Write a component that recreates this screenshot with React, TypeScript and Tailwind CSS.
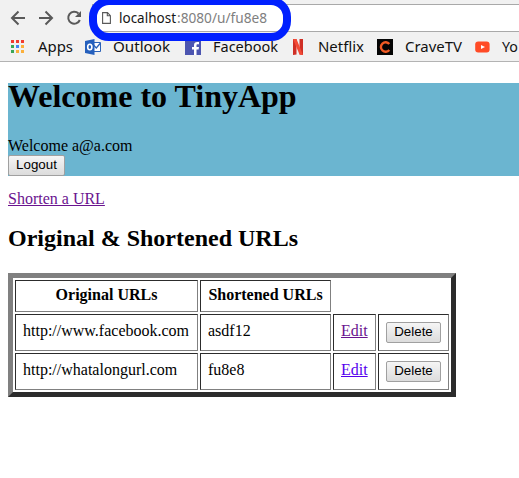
import type { ReactNode } from 'react';

const Label = ({ text, width }: { text: string; width: number }) => (
  <svg width={width} height="20" className="shrink-0 overflow-visible">
    <text x="0" y="15" textLength={width} lengthAdjust="spacingAndGlyphs" className="fill-[#111] font-['Noto_Sans',sans-serif] text-[14.500px]">{text}</text>
  </svg>
);

const AppsIcon = () => (
  <svg width="13" height="13" shapeRendering="crispEdges" className="mb-[2px] shrink-0">
    {['#f23b30', '#f23b30', '#f23b30', '#3aa757', '#4285f4', '#fbb03b', '#3aa757', '#fbb03b', '#fbb03b'].map((c, i) => (
      <rect key={i} x={(i % 3) * 5} y={Math.floor(i / 3) * 5} width="3" height="3" fill={c} />
    ))}
  </svg>
);

const OutlookIcon = () => (
  <svg width="16" height="16" className="shrink-0">
    <path d="M8 3.5h7.5v9H8z" fill="#fff" stroke="#2b62b8" />
    <path d="M8.5 6l2.8 3L15.5 4" fill="none" stroke="#2b62b8" strokeWidth="1.3" />
    <path d="M0 2L9.500 0v16L0 14z" fill="#2560bd" />
    <ellipse cx="4.800" cy="8" rx="2.100" ry="2.800" fill="none" stroke="#fff" strokeWidth="1.600" />
  </svg>
);

const FacebookIcon = () => (
  <svg width="16" height="16" className="shrink-0">
    <path d="M0 0h16v16H0z" fill="#4c55b0" />
    <path d="M9 16v-5.500H7V8h2V6.300C9 4 10.300 3 12.200 3H14v2.300h-1.300c-1 0-1.200.4-1.200 1.200V8H14l-.4 2.500h-2.100V16z" fill="#fff" />
  </svg>
);

const NetflixIcon = () => (
  <svg width="10" height="16" className="shrink-0">
    <path d="M0 0h3.500v15.500L0 16zM6.500 0H10v16l-3.500-.5z" fill="#cf2f26" />
    <path d="M0 0h3.500L10 16l-3.500-.5z" fill="#f34a36" />
  </svg>
);

const CraveIcon = () => (
  <svg width="16" height="16" className="shrink-0">
    <path d="M0 0h16v16H0z" fill="#050505" />
    <path d="M12.300 5.100A4.700 4.700 0 1 0 12.300 10.900" fill="none" stroke="#f05a24" strokeWidth="2.400" />
  </svg>
);

const YoutubeIcon = () => (
  <svg width="15" height="12" className="shrink-0">
    <rect x=".2" y=".5" width="14.400" height="11" rx="3" fill="#ff4b26" />
    <path d="M6 4l4 2-4 2z" fill="#fff" />
  </svg>
);

const Button = ({ children, width }: { children: ReactNode; width: string }) => (
  <button className={`${width} block h-[21px] rounded-[2px] border border-[#a0a0a0] bg-linear-to-b from-[#f5f5f5] to-[#dcdcdc] px-0 pt-0 pb-[2px] text-center font-['Liberation_Sans',sans-serif] text-[13.333px] leading-[17px] text-black`}>{children}</button>
);

const cell = 'border border-t-[#2c2c2c] border-l-[#2c2c2c] border-r-[#808080] border-b-[#808080] px-[7px] align-top';

const Row = ({ url, short, color }: { url: string; short: string; color: string }) => (
  <tr className="h-[37px]">
    <td className={`${cell} pt-[7px]`}>{url}</td>
    <td className={`${cell} pt-[7px]`}>{short}</td>
    <td className={`${cell} pt-[7px]`}><a href="#" className={`${color} underline`}>Edit</a></td>
    <td className={`${cell} pt-[7px]`}><Button width="w-[55px]">Delete</Button></td>
  </tr>
);

export default function App() {
  return (
    <div className="h-[478px] w-[519px] overflow-hidden bg-white font-['Liberation_Serif',serif] text-[16px] leading-[18px] text-black">
      <header className="relative h-[62px] border-b border-[#b3b3b3] bg-[#f1f1f1]">
        <div className="flex h-9 items-center">
          <svg width="92" height="36" fill="none" stroke="#595959" strokeWidth="2" className="shrink-0">
            <path d="M25 18H12.500M18.500 11.500L12 18l6.500 6.500M39 18h12.500M45.500 11.500L52 18l-6.500 6.500" />
            <path d="M78.500 13.500A6 6 0 1 0 79.800 20" />
            <path d="M81 11v6h-6z" fill="#595959" stroke="none" />
          </svg>
          <div className="mb-px flex h-7 grow items-center border-y border-l border-[#a9a9a9] bg-white pl-[9px]">
            <svg width="9" height="12" fill="none" stroke="#595959" strokeWidth="1.100" className="shrink-0">
              <path d="M.6.6h4.900l2.900 3v7.800H.6zM5.300.6v3.200h3.100" />
            </svg>
            <svg width="150" height="22" className="ml-2 overflow-visible font-['Noto_Sans',sans-serif] text-[14.500px]">
              <text x="0" y="16" textLength="57" lengthAdjust="spacingAndGlyphs" fill="#161616">localhost</text>
              <text x="58" y="16" textLength="90" lengthAdjust="spacingAndGlyphs" fill="#808080">:8080/u/fu8e8</text>
            </svg>
          </div>
        </div>
        <nav className="flex h-[22px] items-center pl-[11px]">
          <AppsIcon />
          <span className="ml-[14px] flex"><Label text="Apps" width={35} /></span>
          <span className="ml-[12px] flex"><OutlookIcon /></span>
          <span className="ml-[12px] flex"><Label text="Outlook" width={57} /></span>
          <span className="ml-[15px] flex"><FacebookIcon /></span>
          <span className="ml-[12px] flex"><Label text="Facebook" width={65} /></span>
          <span className="ml-[15px] flex"><NetflixIcon /></span>
          <span className="ml-[15px] flex"><Label text="Netflix" width={46} /></span>
          <span className="ml-[13px] flex"><CraveIcon /></span>
          <span className="ml-[12px] flex"><Label text="CraveTV" width={57} /></span>
          <span className="ml-[13px] flex"><YoutubeIcon /></span>
          <span className="ml-[12px] flex"><Label text="Yo" width={16} /></span>
        </nav>
        <div className="absolute -top-[3px] left-[89px] h-[44px] w-[202px] rounded-[20px] border-8 border-[#0020ff]" />
      </header>
      <main className="pt-[21px] pl-2">
        <section className="h-[93px] bg-[#6bb5d0]">
          <h1 className="text-[32px] leading-[26px] font-bold">Welcome to TinyApp</h1>
          <p className="mt-7">Welcome a@a.com</p>
          <Button width="w-[57px]">Logout</Button>
        </section>
        <p className="mt-[14px]"><a href="#" className="text-[#6a148f] underline">Shorten a URL</a></p>
        <h2 className="mt-[17px] text-[24px] leading-[27px] font-bold">Original &amp; Shortened URLs</h2>
        <table className="mt-[21px] h-[124px] w-[448px] table-fixed border-separate border-spacing-[2px] border-[5px] border-t-[#808080] border-r-[#2c2c2c] border-b-[#2c2c2c] border-l-[#808080]">
          <colgroup><col className="w-[183px]" /><col className="w-[131px]" /><col className="w-[43px]" /><col className="w-[71px]" /></colgroup>
          <tbody>
            <tr className="h-[32px]">
              <th className={`${cell} pt-[5px]`}>Original URLs</th>
              <th className={`${cell} pt-[5px] whitespace-nowrap`}>Shortened URLs</th>
            </tr>
            <Row url="http://www.facebook.com" short="asdf12" color="text-[#6a148f]" />
            <Row url="http://whatalongurl.com" short="fu8e8" color="text-[#5500ee]" />
          </tbody>
        </table>
      </main>
    </div>
  );
}
